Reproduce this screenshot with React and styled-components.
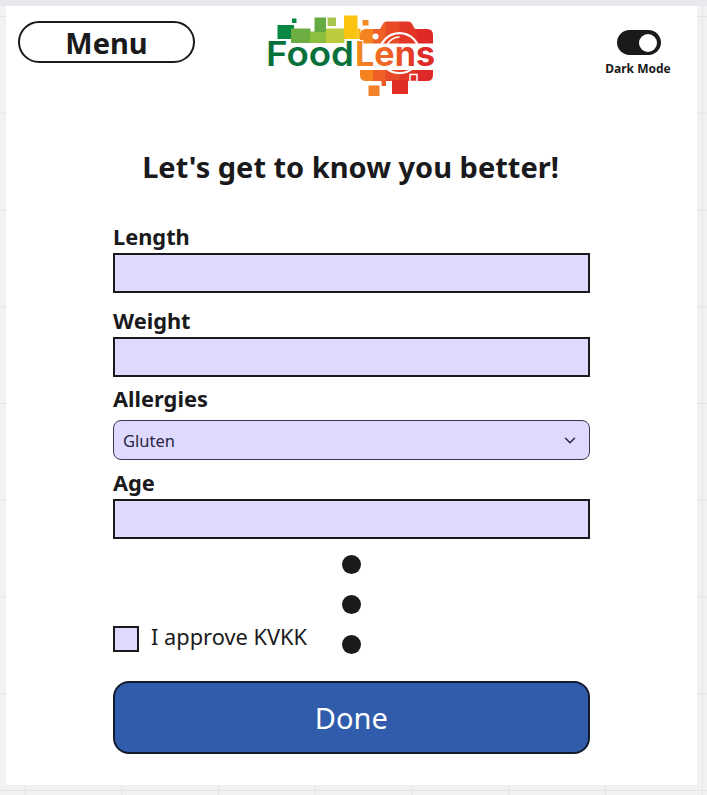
import React from 'react';
import styled, { createGlobalStyle } from 'styled-components';

const ink = '#1a1a1c';
const lilac = '#ded9ff';

const GlobalStyle = createGlobalStyle`
  * { box-sizing: border-box; }
  body {
    margin: 0;
    color: ${ink};
    font-family: "Noto Sans", "Open Sans", sans-serif;
  }
  button, input { font-family: inherit; color: inherit; }
`;

const Canvas = styled.div`
  width: 707px;
  height: 795px;
  overflow: hidden;
  padding: 6px 10px 10px 6px;
  background:
    linear-gradient(#e9e8ef, #e9e8ef) 0 0 / 100% 6px no-repeat,
    linear-gradient(90deg, #e4e4e4 1px, transparent 1px) 24.5px 0 / 96.75px 100%,
    linear-gradient(#e4e4e4 1px, transparent 1px) 0 16px / 100% 96.75px,
    #f2f2f2;
`;

const Frame = styled.main`
  width: 691px;
  height: 779px;
  background: #fff;
`;

const Header = styled.header`
  display: grid;
  grid-template-columns: 177px 1fr 80px;
  align-items: start;
  height: 130px;
  padding: 15px 19px 0 12px;
`;

const MenuButton = styled.button`
  height: 42px;
  padding: 1px 0 0;
  border: 2px solid ${ink};
  border-radius: 21px;
  background: #fff;
  font-size: 29px;
  font-weight: 700;
  line-height: 38px;
`;

const Logo = styled.svg`
  display: block;
  width: 172px;
  height: 90px;
  margin: -10px 0 0 70px;
`;

const ThemeSwitch = styled.div`
  display: flex;
  flex-direction: column;
  align-items: center;
  padding-top: 9px;
  font-size: 12px;
  font-weight: 700;
  line-height: 16px;
`;

const Track = styled.div`
  display: flex;
  justify-content: flex-end;
  width: 44px;
  height: 25px;
  margin: 0 0 6px 1px;
  padding: 3.5px;
  border-radius: 13px;
  background: ${ink};
`;

const Knob = styled.div`
  width: 18px;
  height: 18px;
  border-radius: 50%;
  background: #fff;
`;

const Title = styled.h1`
  height: 85px;
  margin: 0;
  padding: 11px 2px 0 0;
  font-size: 29px;
  line-height: 40px;
  text-align: center;
  white-space: nowrap;
`;

const Form = styled.form`
  width: 476.5px;
  margin-left: 107px;
`;

const Field = styled.label`
  display: block;
  height: ${(p) => p.$height}px;
`;

const Caption = styled.span`
  display: block;
  height: ${(p) => p.$height || 32}px;
  font-size: 21.8px;
  font-weight: 700;
  line-height: 32px;
`;

const TextInput = styled.input`
  display: block;
  width: 100%;
  height: 40px;
  border: 2px solid ${ink};
  border-radius: 0;
  outline: 0;
  background: ${lilac};
`;

const SelectBox = styled.div`
  display: flex;
  align-items: center;
  justify-content: space-between;
  height: 40px;
  padding: 0 12px 0 9px;
  border: 1px solid #38364a;
  border-radius: 8px;
  background: ${lilac};
  color: #292741;
  font-size: 16.5px;
`;

const LowerArea = styled.div`
  display: flex;
  justify-content: space-between;
  height: 127px;
  padding: 1px 229px 0 0;
`;

const Consent = styled.label`
  display: flex;
  align-items: center;
  gap: 12px;
  height: 30px;
  margin-top: 67px;
  font-size: 21.8px;
  line-height: 30px;
`;

const Box = styled.span`
  width: 26px;
  height: 26px;
  margin-top: 3px;
  border: 2px solid ${ink};
  background: ${lilac};
`;

const Dots = styled.div`
  display: flex;
  flex-direction: column;
  gap: 21px;
`;

const Dot = styled.i`
  width: 19px;
  height: 19px;
  border-radius: 50%;
  background: ${ink};
`;

const DoneButton = styled.button`
  display: block;
  width: 100%;
  height: 73px;
  padding: 0;
  border: 2px solid #141b2c;
  border-radius: 16px;
  background: #305cab;
  color: #fff;
  font-size: 29px;
  line-height: 40px;
`;

function FoodLensLogo() {
  return (
    <Logo viewBox="265 11 172 90" role="img" aria-label="FoodLens">
      <defs>
        <linearGradient id="lettering" gradientUnits="userSpaceOnUse" x1="357" y1="0" x2="434" y2="0">
          <stop offset="0" stopColor="#f28a22" />
          <stop offset=".5" stopColor="#ed5925" />
          <stop offset=".8" stopColor="#df2b27" />
        </linearGradient>
        <clipPath id="camera">
          <path d="M366 29h14l3.5-6q1-1.5 3-1.5h22q2 0 3 1.5l3.5 6h12q6 0 6 6v8.5h-73V35q0-6 6-6zM360 70h73v5q0 6-6 6h-61q-6 0-6-6z" />
        </clipPath>
      </defs>
      <path fill="#078943" d="M292 18.5h4.5V23H292zM277.5 25H294v14h-16.5z" />
      <path fill="#6dae43" d="M291 28.5h19.5V43H291z" />
      <path fill="#8cbe40" d="M310 31.5h17v11.5h-17z" />
      <path fill="#64aa42" d="M314.5 17.5H326V32h-11.5z" />
      <path fill="#a9c64d" d="M327.5 17.5h8.5V26h-8.5z" />
      <path fill="#bccb3c" d="M326 28.5h18.5V43H326z" />
      <path fill="#fac30f" d="M344 15.5h13.5V39H344z" />
      <path fill="#fab817" d="M357.5 28.5h3V39h-3z" />
      <path fill="#f58b25" d="M362.5 20h6v5.5h-6z" />
      <g clipPath="url(#camera)">
        <path fill="#f58420" d="M359 20h14.5v62H359z" />
        <path fill="#ee6025" d="M373 20h13v62h-13z" />
        <path fill="#e84a27" d="M385.5 20H400v62h-14.5z" />
        <path fill="#e33627" d="M399.5 20H417v62h-17.5z" />
        <path fill="#df2928" d="M416.5 20H434v62h-17.5z" />
      </g>
      <circle cx="375.5" cy="36.5" r="3" fill="#fff" />
      <circle cx="399.5" cy="53.2" r="20" fill="none" stroke="#fff" strokeWidth="2.2" />
      <path d="M387.5 44a15 15 0 0 1 12-7" fill="none" stroke="#fff" strokeWidth="1.5" />
      <path fill="#f48228" d="M368.5 85.5h11V96h-11z" />
      <path fill="#ec5b25" d="M381.5 80.5h4.5V86h-4.5z" />
      <path fill="#e02d28" d="M392 80h16v14h-16z" />
      <path fill="#e02d28" stroke="#fff" strokeWidth="1.5" d="M410 74.5h7v7h-7z" />
      <g fontFamily="Inter" fontSize="33.5" fontWeight="600" stroke="#fff" strokeWidth="2.5" paintOrder="stroke" strokeLinejoin="round">
        <text x="266" y="66" fill="#08713b" textLength="88" lengthAdjust="spacingAndGlyphs">Food</text>
        <text x="355" y="66" fill="url(#lettering)" fontWeight="700" strokeWidth="2" textLength="80" lengthAdjust="spacingAndGlyphs">Lens</text>
      </g>
    </Logo>
  );
}

function InputField({ name, height }) {
  return (
    <Field $height={height}>
      <Caption>{name}</Caption>
      <TextInput aria-label={name} />
    </Field>
  );
}

export default function App() {
  return (
    <>
      <GlobalStyle />
      <Canvas>
        <Frame>
          <Header>
            <MenuButton>Menu</MenuButton>
            <FoodLensLogo />
            <ThemeSwitch><Track><Knob /></Track>Dark Mode</ThemeSwitch>
          </Header>
          <Title>Let's get to know you better!</Title>
          <Form>
            <InputField name="Length" height={84} />
            <InputField name="Weight" height={78} />
            <Field as="div" $height={84}>
              <Caption $height={37}>Allergies</Caption>
              <SelectBox>
                Gluten
                <svg width="14" height="14" viewBox="0 0 14 14" fill="none" stroke="#292741" strokeWidth="1.5" strokeLinecap="round" strokeLinejoin="round">
                  <path d="M2.5 5.2 7 9.8l4.5-4.6" />
                </svg>
              </SelectBox>
            </Field>
            <InputField name="Age" height={87} />
            <LowerArea>
              <Consent><Box />I approve KVKK</Consent>
              <Dots><Dot /><Dot /><Dot /></Dots>
            </LowerArea>
            <DoneButton type="button">Done</DoneButton>
          </Form>
        </Frame>
      </Canvas>
    </>
  );
}
